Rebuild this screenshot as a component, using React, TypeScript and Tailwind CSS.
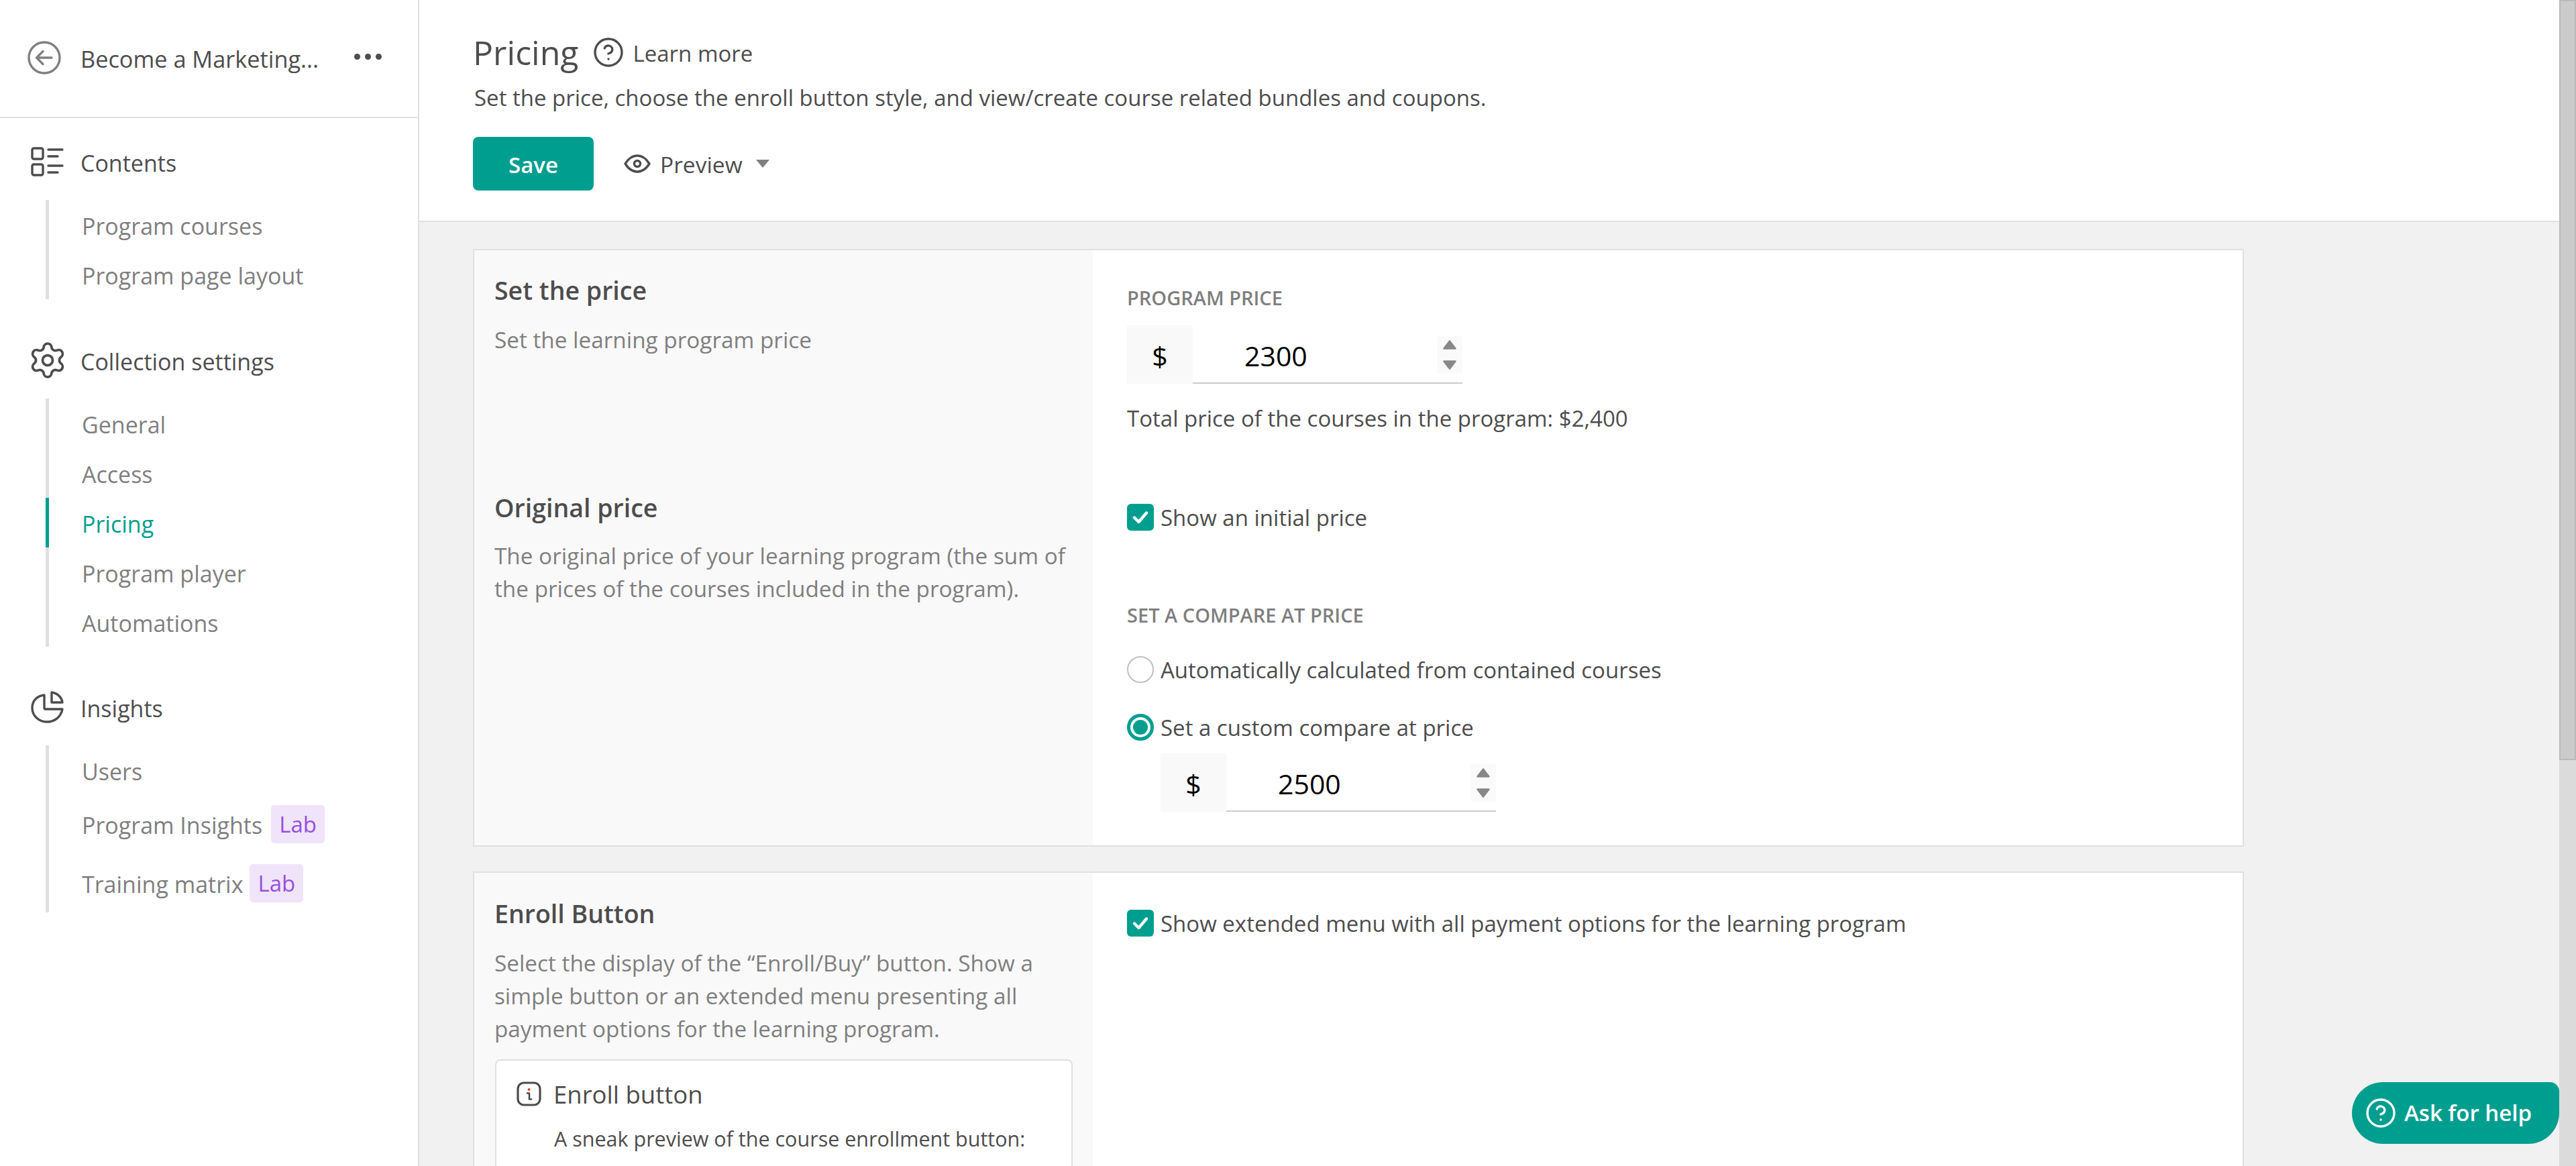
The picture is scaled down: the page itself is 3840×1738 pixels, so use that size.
import { CircleHelp, Settings } from 'lucide-react';
import type { ReactNode } from 'react';

const BackIcon = () => (
    <svg viewBox="0 0 50 50" className="w-[50px] h-[50px] shrink-0" fill="none" stroke="#808080" strokeWidth="3.4" strokeLinecap="round" strokeLinejoin="round">
        <circle cx="25" cy="25" r="23" />
        <path d="M36 25H14M23 15.5L13.5 25L23 34.5" />
    </svg>
);

const ContentsIcon = () => (
    <svg viewBox="0 0 49 44" className="w-[49px] h-[44px]" fill="none" stroke="#4d4d4d" strokeWidth="3.4" strokeLinecap="round" strokeLinejoin="round">
        <rect x="2" y="2" width="16" height="16" rx="2.5" />
        <rect x="2" y="26" width="16" height="16" rx="2.5" />
        <path d="M26 4H47M26 14H40M26 28H47M26 38H40" />
    </svg>
);

const InsightsIcon = () => (
    <svg viewBox="0 0 49 48" className="w-[49px] h-[48px]" fill="none" stroke="#4d4d4d" strokeWidth="3.4" strokeLinecap="round" strokeLinejoin="round">
        <path d="M20 6C10 7 2 14 2 25C2 37 12 46 24 46C36 46 45 38 47 27H22C20.5 27 20 26 20 25Z" />
        <path d="M31 2V17H47C46 9 39 3 31 2Z" />
    </svg>
);

const EyeIcon = () => (
    <svg viewBox="0 0 40 28" className="ml-[45px] w-[40px] h-[28px]" fill="none" stroke="#4d4d4d" strokeWidth="3.4" strokeLinejoin="round">
        <path d="M2 14C7 6 13 2 20 2C27 2 33 6 38 14C33 22 27 26 20 26C13 26 7 22 2 14Z" />
        <circle cx="20" cy="14" r="4.5" />
    </svg>
);

const InfoIcon = () => (
    <svg viewBox="0 0 37 37" className="w-[37px] h-[37px] shrink-0" fill="none">
        <rect x="2" y="2" width="33" height="33" rx="9" stroke="#4d4d4d" strokeWidth="3.2" />
        <circle cx="18.5" cy="12" r="2" fill="#e8441f" />
        <path d="M16 17.5H19V26.5H22" stroke="#4d4d4d" strokeWidth="2.6" strokeLinecap="round" strokeLinejoin="round" />
    </svg>
);

const CheckMark = () => (
    <svg viewBox="0 0 40 40" className="w-[40px] h-[40px]" fill="none" stroke="#fff" strokeWidth="4.4" strokeLinecap="round" strokeLinejoin="round">
        <path d="M11 20.5L17.5 27L29 13.5" />
    </svg>
);

const Checkbox = () => (
    <span className="w-[40px] h-[40px] shrink-0 rounded-[6px] bg-[#009e8f] flex">
        <CheckMark />
    </span>
);

const Spinner = () => (
    <div className="ml-auto self-start mt-[16px] w-[38px] h-[56px] bg-[#fafafa] flex flex-col items-center justify-center gap-[16px]">
        <svg viewBox="0 0 20 15" className="w-[20px] h-[15px]" fill="#888888" stroke="#888888" strokeWidth="2.6" strokeLinejoin="round">
            <path d="M10 2.5L18.5 13.5H1.5Z" />
        </svg>
        <svg viewBox="0 0 20 15" className="w-[20px] h-[15px]" fill="#888888" stroke="#888888" strokeWidth="2.6" strokeLinejoin="round">
            <path d="M1.5 1.5H18.5L10 12.5Z" />
        </svg>
    </div>
);

const PriceInput = ({ value, width, pad }: { value: string; width: string; pad: string }) => (
    <div className="flex h-[87px]">
        <div className="w-[98px] h-full bg-[#f9f9f9] flex items-center justify-center pt-[4px] text-[41px] text-black">$</div>
        <div className={`flex border-b-2 border-[#cccccc] ${width}`}>
            <input readOnly value={value} className={`w-[240px] h-full pt-[4px] outline-none bg-transparent text-[41px] text-black ${pad}`} />
            <Spinner />
        </div>
    </div>
);

const SideItem = ({ children, active, tall }: { children: ReactNode; active?: boolean; tall?: boolean }) => (
    <div className={`flex items-center pl-[49px] pt-[4px] -ml-[5px] border-l-[5px] ${tall ? 'h-[87.5px]' : 'h-[74px]'} ${active ? 'border-[#009e8f] text-[#009e8f]' : 'border-transparent text-[#7f7f7f]'}`}>
        {children}
    </div>
);

const LabBadge = ({ className }: { className: string }) => (
    <span className={`h-[57px] w-[80px] -mt-[4px] rounded-[5px] bg-[#f0e4fb] text-[#9650e0] flex items-center justify-center text-[33px] ${className}`}>Lab</span>
);

const SideGroup = ({ icon, title, children, className }: { icon: ReactNode; title: string; children: ReactNode; className: string }) => (
    <div className={className}>
        <div className="flex items-center h-[60px] pl-[46px]">
            <div className="w-[49px] flex justify-center shrink-0">{icon}</div>
            <span className="ml-[25px] pt-[4px] text-[34px] font-medium text-[#4d4d4d]">{title}</span>
        </div>
        <div className="ml-[68px] mt-[27px] border-l-[5px] border-[#e0e0e0] text-[34px]">{children}</div>
    </div>
);

const Sidebar = () => (
    <aside className="w-[625px] h-full shrink-0 bg-white border-r-2 border-[#e0e0e0]">
        <div className="h-[176px] border-b-2 border-[#e0e0e0] flex items-center pl-[41px] pb-[2px]">
            <BackIcon />
            <span className="ml-[29px] w-[408px] pt-[4px] text-[34.3px] font-medium text-[#4d4d4d] whitespace-nowrap">Become a Marketing...</span>
            <span className="flex gap-[7px] mb-[4px]">
                <i className="w-[9px] h-[9px] rounded-full bg-[#4d4d4d]" />
                <i className="w-[9px] h-[9px] rounded-full bg-[#4d4d4d]" />
                <i className="w-[9px] h-[9px] rounded-full bg-[#4d4d4d]" />
            </span>
        </div>
        <SideGroup className="mt-[35px]" icon={<ContentsIcon />} title="Contents">
            <SideItem>Program courses</SideItem>
            <SideItem>Program page layout</SideItem>
        </SideGroup>
        <SideGroup className="mt-[61px]" icon={<Settings size={60} color="#4d4d4d" strokeWidth={1.5} className="-mx-[6px]" />} title="Collection settings">
            <SideItem>General</SideItem>
            <SideItem>Access</SideItem>
            <SideItem active>Pricing</SideItem>
            <SideItem>Program player</SideItem>
            <SideItem>Automations</SideItem>
        </SideGroup>
        <SideGroup className="mt-[60px]" icon={<InsightsIcon />} title="Insights">
            <SideItem>Users</SideItem>
            <SideItem tall>Program Insights<LabBadge className="ml-[13px]" /></SideItem>
            <SideItem tall>Training matrix<LabBadge className="ml-[10px]" /></SideItem>
        </SideGroup>
    </aside>
);

const PageHeader = () => (
    <header className="h-[331px] shrink-0 bg-white border-b-2 border-[#e0e0e0] pl-[80px]">
        <div className="pt-[48px] h-[108px] flex items-center">
            <h1 className="text-[50px] text-[#4d4d4d]">Pricing</h1>
            <CircleHelp size={48} color="#4d4d4d" strokeWidth={1.7} className="ml-[20px]" />
            <span className="ml-[13px] pt-[4px] text-[33px] font-medium text-[#4d4d4d]">Learn more</span>
        </div>
        <p className="mt-[14px] h-[48px] ml-[2px] flex items-center text-[33px] text-[#4d4d4d]">Set the price, choose the enroll button style, and view/create course related bundles and coupons.</p>
        <div className="mt-[34px] flex items-center">
            <button className="w-[180px] h-[80px] pt-[3px] rounded-[8px] bg-[#009e8f] text-white text-[33px] font-semibold">Save</button>
            <EyeIcon />
            <span className="ml-[14px] pt-[3px] text-[33.5px] font-medium text-[#4d4d4d]">Preview</span>
            <svg viewBox="0 0 20 12" className="ml-[20px] w-[20px] h-[12px]" fill="#808080"><path d="M0 0H20L10 12Z" /></svg>
        </div>
    </header>
);

const RowLabel = ({ children }: { children: ReactNode }) => (
    <div className="h-[40px] flex items-center text-[29px] font-semibold text-[#7f7f7f]">{children}</div>
);

const OptionText = ({ children }: { children: ReactNode }) => (
    <span className="ml-[10px] pt-[2px] text-[33px] text-[#4d4d4d] whitespace-nowrap">{children}</span>
);

const SectionTitle = ({ children }: { children: ReactNode }) => (
    <h3 className="h-[50px] flex items-center text-[37.5px] font-semibold text-[#4d4d4d]">{children}</h3>
);

const SectionDesc = ({ children, className }: { children: ReactNode; className: string }) => (
    <p className={`text-[33.3px] leading-[49px] text-[#7f7f7f] whitespace-nowrap ${className}`}>{children}</p>
);

const PriceCard = () => (
    <section className="w-[2640px] h-[891px] shrink-0 border-2 border-[#e0e0e0] bg-white flex">
        <div className="w-[922px] shrink-0 bg-[#f9f9f9] pl-[30px] pt-[35px]">
            <SectionTitle>Set the price</SectionTitle>
            <SectionDesc className="mt-[24px]">Set the learning program price</SectionDesc>
            <div className="mt-[201px]"><SectionTitle>Original price</SectionTitle></div>
            <SectionDesc className="mt-[22px]">
                The original price of your learning program (the sum of<br />
                the prices of the courses included in the program).
            </SectionDesc>
        </div>
        <div className="flex-1 pl-[51px] pt-[51px]">
            <RowLabel>PROGRAM PRICE</RowLabel>
            <div className="mt-[21px]"><PriceInput value="2300" width="w-[402px]" pad="pl-[77px]" /></div>
            <p className="mt-[28px] h-[48px] flex items-center text-[33px] text-[#4d4d4d]">Total price of the courses in the program: $2,400</p>
            <div className="mt-[103px] h-[40px] flex items-center"><Checkbox /><OptionText>Show an initial price</OptionText></div>
            <div className="mt-[106px]"><RowLabel>SET A COMPARE AT PRICE</RowLabel></div>
            <div className="mt-[41px] h-[40px] flex items-center">
                <span className="w-[40px] h-[40px] rounded-full border-2 border-[#c0c0c0] bg-white shrink-0" />
                <OptionText>Automatically calculated from contained courses</OptionText>
            </div>
            <div className="mt-[46px] h-[40px] flex items-center">
                <span className="w-[40px] h-[40px] rounded-full border-[5px] border-[#009e8f] bg-white shrink-0 flex items-center justify-center">
                    <i className="w-[22px] h-[22px] rounded-full bg-[#009e8f]" />
                </span>
                <OptionText>Set a custom compare at price</OptionText>
            </div>
            <div className="mt-[19px] ml-[50px]"><PriceInput value="2500" width="w-[402px]" pad="pl-[77px]" /></div>
        </div>
    </section>
);

const EnrollCard = () => (
    <section className="mt-[37px] w-[2640px] h-[900px] shrink-0 border-2 border-[#e0e0e0] bg-white flex">
        <div className="w-[922px] shrink-0 bg-[#f9f9f9] pl-[30px] pt-[36px]">
            <SectionTitle>Enroll Button</SectionTitle>
            <SectionDesc className="mt-[24px]">
                Select the display of the “Enroll/Buy” button. Show a<br />
                simple button or an extended menu presenting all<br />
                payment options for the learning program.
            </SectionDesc>
            <div className="mt-[21px] ml-px w-[861px] h-[400px] bg-white border-2 border-[#e0e0e0] rounded-[8px] pl-[30px] pt-[31px]">
                <div className="flex items-center h-[37px]">
                    <InfoIcon />
                    <span className="ml-[18px] pt-[2px] text-[36.5px] font-medium text-[#4d4d4d]">Enroll button</span>
                </div>
                <p className="mt-[24px] ml-[56px] text-[30.5px] leading-[49px] text-[#4d4d4d] whitespace-nowrap">A sneak preview of the course enrollment button:</p>
            </div>
        </div>
        <div className="flex-1 pl-[51px] pt-[55px]">
            <div className="h-[40px] flex items-center"><Checkbox /><OptionText>Show extended menu with all payment options for the learning program</OptionText></div>
        </div>
    </section>
);

const App = () => (
    <div className="relative w-[3840px] h-[1738px] flex overflow-hidden bg-white" style={{ fontFamily: '"Open Sans", sans-serif' }}>
        <Sidebar />
        <main className="flex-1 min-w-0 h-full flex flex-col">
            <PageHeader />
            <div className="flex-1 min-h-0 overflow-hidden bg-[#f1f1f1] pl-[80px] pt-[40px]">
                <PriceCard />
                <EnrollCard />
            </div>
        </main>
        {/* fake scrollbar */}
        <div className="w-[25px] h-full shrink-0 bg-[#dbdbdb]">
            <div className="h-[1133px] bg-[#cbcbcb] border-2 border-[#b9b9b9]" />
        </div>
        <button className="absolute right-[25px] bottom-[33px] w-[309px] h-[92px] rounded-[46px] rounded-tr-[14px] bg-[#009e8f] text-white flex items-center pl-[19px]">
            <CircleHelp size={48} strokeWidth={1.7} />
            <span className="ml-[11px] text-[33px] font-semibold">Ask for help</span>
        </button>
    </div>
);

export default App;
